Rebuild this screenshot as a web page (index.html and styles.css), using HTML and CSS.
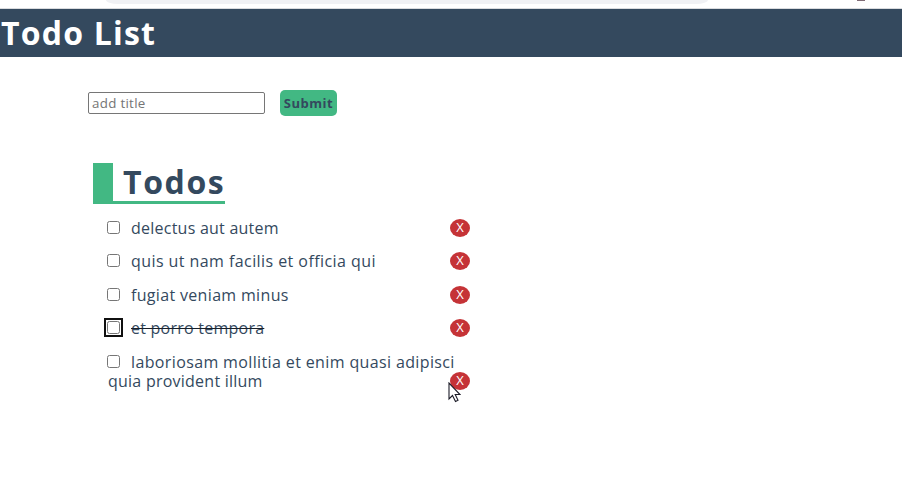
FILE: index.html
```html
<!DOCTYPE html>
<html lang="en">
<head>
<meta charset="utf-8">
<title>Todo List</title>
<link rel="stylesheet" href="styles.css">
</head>
<body>
<div class="browser"><div class="address"></div><div class="avatar"></div></div>
<header class="header"><h1>Todo List</h1></header>
<main class="main">
<form class="form"><input class="field" type="text" placeholder="add title"><button class="submit" type="button">Submit</button></form>
<h2 class="heading">Todos</h2>
<ul class="list">
<li class="item"><p class="text"><input type="checkbox" class="check"><span class="tight">delectus aut autem</span></p><button class="del">X</button></li>
<li class="item"><p class="text"><input type="checkbox" class="check"><span class="wide">quis ut nam facilis et officia qui</span></p><button class="del">X</button></li>
<li class="item"><p class="text"><input type="checkbox" class="check"><span>fugiat veniam minus</span></p><button class="del">X</button></li>
<li class="item"><p class="text"><input type="checkbox" class="check focused"><span class="tight done">et porro tempora</span></p><button class="del">X</button></li>
<li class="item"><p class="text"><input type="checkbox" class="check"><span class="medium">laboriosam mollitia et enim quasi adipisci</span><br><span class="tight">quia provident illum</span></p><button class="del">X</button>
<svg class="cursor" width="13" height="21" viewBox="0 0 13 21"><path d="M1 1v16l3.5-3.5 3 6 2.5-1.2-2.8-5.8H12z" fill="#fff" stroke="#1c1c28" stroke-width="1.1"/></svg></li>
</ul>
</main>
</body>
</html>
```
FILE: styles.css
```css
* { box-sizing: border-box; }
body { margin: 0; height: 501px; overflow: hidden; background: #fff; color: #34495e; font-family: "Open Sans", sans-serif; font-size: 16px; }
.browser { display: flex; height: 9px; border-bottom: 1px solid #d9dbde; }
.address { width: 602px; height: 4px; margin-left: 106px; background: #f0f1f4; border-radius: 0 0 12px 12px / 0 0 4px 4px; }
.avatar { width: 8px; height: 1px; margin-left: 149px; background: #806c76; }
.header { height: 48px; background: #34495e; color: #fff; }
.header h1 { margin: 0; padding-left: 1px; font-size: 32px; line-height: 47px; letter-spacing: 1.2px; }
.main { padding: 33px 0 0 88px; }
.form { display: flex; align-items: center; height: 26px; gap: 15px; }
.field { width: 177px; height: 22px; padding: 0 3px 1px; border: 1px solid #767676; border-radius: 2px; font: 13.33px "Open Sans", sans-serif; letter-spacing: 0.3px; }
.field::placeholder { color: #757575; }
.submit { width: 57px; height: 26px; padding: 0; border: 0; border-radius: 5px; background: #42b883; color: #34495e; font: bold 13px "Open Sans", sans-serif; letter-spacing: 0.5px; }
.heading { width: 132px; height: 41px; margin: 47px 0 0 5px; padding-left: 10px; border-left: 20px solid #42b883; border-bottom: 3px solid #42b883; font-size: 32px; line-height: 37px; letter-spacing: 1.6px; white-space: nowrap; }
.list { width: 363px; margin: 14.9px 0 0 19px; padding: 0; list-style: none; }
.item { position: relative; display: flex; justify-content: space-between; align-items: flex-end; margin-bottom: 14.5px; }
.text { margin: 0 0 0 1px; line-height: 19px; white-space: nowrap; letter-spacing: 0.33px; }
.tight { letter-spacing: 0.24px; }
.medium { letter-spacing: 0.37px; }
.wide { letter-spacing: 0.43px; }
.check { width: 13px; height: 13px; margin: 0 11px 0 -1px; vertical-align: 0; }
.done { text-decoration: line-through; text-decoration-color: #18202a; }
.focused { outline: 2px solid #101010; outline-offset: 1px; border-radius: 2px; }
.del { width: 20px; height: 18px; margin: 0 0 1px -30px; padding: 0 0 1px; border: 0; border-radius: 50%; background: #c53337; color: #fff; font: 13px/17px "Open Sans", sans-serif; }
.cursor { position: absolute; left: 341px; top: 29px; }
```
